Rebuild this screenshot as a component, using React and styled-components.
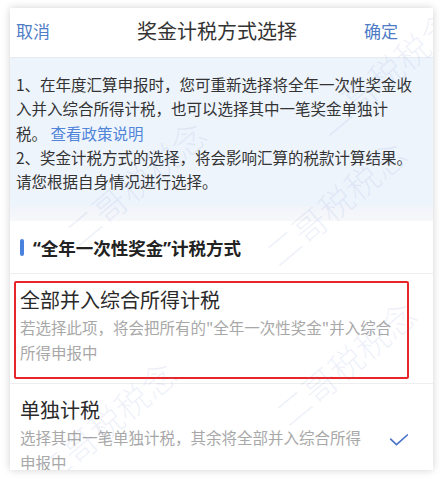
import React from "react";
import styled, { createGlobalStyle } from "styled-components";

const GlobalStyle = createGlobalStyle`
	body {
		margin: 0;
		background: #ffffff;
		font-family: "Noto Sans CJK SC", "Noto Sans", sans-serif;
	}
`;

const options = [
	{
		title: "全部并入综合所得计税",
		desc: ["若选择此项，将会把所有的\"全年一次性奖金\"并入综合", "所得申报中"],
		marked: true,
	},
	{
		title: "单独计税",
		desc: ["选择其中一笔单独计税，其余将全部并入综合所得", "申报中"],
		checked: true,
	},
];

const marks = [
	{ left: 290, top: 40 },
	{ left: 40, top: 150 },
	{ left: 240, top: 170 },
	{ left: 250, top: 330 },
	{ left: 10, top: 390 },
];

export default function App() {
	return (
		<>
			<GlobalStyle />
			<Page>
				<Card>
					<Header>
						<HeaderLink>取消</HeaderLink>
						<Title>奖金计税方式选择</Title>
						<HeaderLink>确定</HeaderLink>
					</Header>
					<Notice>
						1、在年度汇算申报时，您可重新选择将全年一次性奖金收
						<br />
						入并入综合所得计税，也可以选择其中一笔奖金单独计
						<br />
						税。 <Link>查看政策说明</Link>
						<br />
						2、奖金计税方式的选择，将会影响汇算的税款计算结果。
						<br />
						请您根据自身情况进行选择。
					</Notice>
					<Gap />
					<Section>
						<SectionTitle>
							<Bar />
							“全年一次性奖金”计税方式
						</SectionTitle>
						{options.map((o) => (
							<Option key={o.title}>
								<OptionBody $marked={o.marked}>
									<OptionTitle>{o.title}</OptionTitle>
									<OptionDesc>
										{o.desc[0]}
										<br />
										{o.desc[1]}
									</OptionDesc>
								</OptionBody>
								{o.checked && (
									<Check viewBox="0 0 24 16">
										<path d="M2 7l7 6.5L22 2" />
									</Check>
								)}
							</Option>
						))}
					</Section>
					{marks.map((m, i) => (
						<Watermark key={i} style={{ left: m.left, top: m.top }}>
							二哥税税念
						</Watermark>
					))}
				</Card>
			</Page>
		</>
	);
}

const Page = styled.div`
	padding: 8px 12px 12px 10px;
`;

const Card = styled.div`
	position: relative;
	width: 423px;
	height: 462px;
	overflow: hidden;
	background: #ffffff;
	box-shadow: 0 0 8px rgba(0, 0, 0, 0.18);
`;

const Header = styled.div`
	display: flex;
	align-items: center;
	justify-content: space-between;
	height: 44px;
	padding: 0 35px 5px 6px;
	border-bottom: 1px solid #e6ebf3;
	background: #ffffff;
`;

const HeaderLink = styled.span`
	font-size: 17px;
	color: #4f7cc6;
`;

const Title = styled.span`
	font-size: 20px;
	color: #333333;
	margin-left: 20px;
`;

const Notice = styled.div`
	background: #eef4fc;
	padding: 14px 6px 13px;
	font-size: 15.5px;
	line-height: 24.3px;
	color: #333333;
	white-space: nowrap;
`;

const Link = styled.span`
	color: #4f84d8;
`;

const Gap = styled.div`
	height: 15px;
	background: linear-gradient(#f0f4fa, #f7f8fa);
`;

const Section = styled.div`
	background: #ffffff;
`;

const SectionTitle = styled.div`
	display: flex;
	align-items: center;
	height: 52px;
	padding-left: 10px;
	font-family: "Noto Sans", "Noto Sans CJK SC", sans-serif;
	font-size: 17.5px;
	font-weight: 700;
	color: #222222;
	border-bottom: 1px solid #eeeeee;
`;

const Bar = styled.span`
	width: 4px;
	height: 17px;
	border-radius: 2px;
	background: #4a82e0;
	margin-right: 9px;
`;

const Option = styled.div`
	display: flex;
	align-items: center;
	padding: 7px 4px 4px;
	border-bottom: 1px solid #eeeeee;
`;

const OptionBody = styled.div`
	flex: 1;
	padding: 3px 4px 12px 4px;
	margin-right: 20px;
	border: 2px solid ${(p) => (p.$marked ? "#e8262a" : "transparent")};
	border-radius: 2px;
`;

const OptionTitle = styled.div`
	font-size: 20px;
	line-height: 28px;
	color: #2a2a2a;
`;

const OptionDesc = styled.div`
	margin-top: 1px;
	font-size: 15.5px;
	line-height: 25px;
	color: #a8a8a8;
	white-space: nowrap;
`;

const Check = styled.svg`
	width: 20px;
	height: 14px;
	margin: 0 20px 0 -30px;
	fill: none;
	stroke: #4a72c8;
	stroke-width: 2;
	stroke-linecap: round;
	stroke-linejoin: round;
`;

const Watermark = styled.div`
	position: absolute;
	font-size: 34px;
	font-weight: 300;
	color: rgba(120, 140, 210, 0.12);
	transform: rotate(-40deg);
	white-space: nowrap;
	pointer-events: none;
`;
